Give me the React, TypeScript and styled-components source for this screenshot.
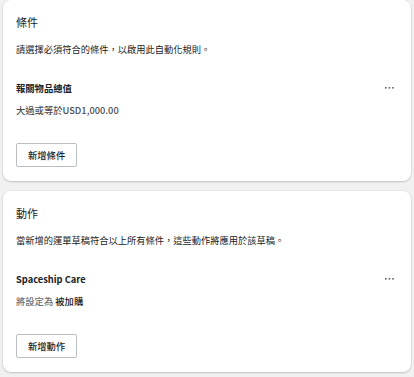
import styled, { createGlobalStyle } from "styled-components";

const GlobalStyle = createGlobalStyle`
  body {
    margin: 0;
    background: #f1f1f1;
    font-family: "Noto Sans CJK TC", "Noto Sans", sans-serif;
    color: #202223;
  }
`;

const Page = styled.div`
  display: flex;
  flex-direction: column;
  gap: 10px;
  padding: 0 3px 4px;
`;

const Card = styled.section`
  background: #fff;
  border-radius: 8px;
  box-shadow: 0 1px 2px rgba(0, 0, 0, 0.18), 0 0 0 1px rgba(0, 0, 0, 0.03);
  padding: 14px 13px 14px 13px;
  display: flex;
  flex-direction: column;
`;

const Title = styled.h2`
  margin: 0;
  font-size: 11px;
  font-weight: 400;
  line-height: 16px;
  color: #202223;
`;

const Description = styled.p`
  margin: 12px 0 0;
  font-size: 9.25px;
  line-height: 14px;
  color: #202223;
`;

const Item = styled.div`
  margin-top: 25px;
  display: flex;
  flex-direction: column;
  gap: 8px;
`;

const ItemHead = styled.div`
  display: flex;
  align-items: center;
  justify-content: space-between;
`;

const ItemTitle = styled.span`
  font-size: 9.3px;
  font-weight: 700;
  line-height: 14px;
  color: #202223;
`;

const MoreButton = styled.button`
  border: none;
  background: none;
  padding: 0;
  margin-right: 2px;
  width: 14px;
  height: 14px;
  display: flex;
  align-items: center;
  justify-content: center;
  cursor: pointer;
`;

const ItemValue = styled.span<{ $muted?: boolean }>`
  font-size: 9.3px;
  line-height: 14px;
  font-weight: 500;
  color: ${(p) => (p.$muted ? "#6d7175" : "#4a4d50")};
`;

const Strong = styled.span`
  color: #202223;
  font-weight: 500;
`;

const AddButton = styled.button`
  margin-top: 26px;
  align-self: flex-start;
  height: 24px;
  padding: 0 11px;
  background: #fff;
  border: 1px solid #babfc3;
  border-radius: 2px;
  font-family: inherit;
  font-size: 9.3px;
  font-weight: 500;
  color: #202223;
  cursor: pointer;
`;

const Dots = () => (
  <svg width="9" height="2" viewBox="0 0 9 2">
    <rect x="0" y="0" width="1.6" height="1.6" fill="#5c5f62" />
    <rect x="3.6" y="0" width="1.6" height="1.6" fill="#5c5f62" />
    <rect x="7.2" y="0" width="1.6" height="1.6" fill="#5c5f62" />
  </svg>
);

export default function App() {
  return (
    <>
      <GlobalStyle />
      <Page>
        <Card>
          <Title>條件</Title>
          <Description>請選擇必須符合的條件，以啟用此自動化規則。</Description>
          <Item>
            <ItemHead>
              <ItemTitle>報關物品總值</ItemTitle>
              <MoreButton aria-label="更多">
                <Dots />
              </MoreButton>
            </ItemHead>
            <ItemValue>大過或等於USD1,000.00</ItemValue>
          </Item>
          <AddButton>新增條件</AddButton>
        </Card>
        <Card>
          <Title>動作</Title>
          <Description>當新增的運單草稿符合以上所有條件，這些動作將應用於該草稿。</Description>
          <Item>
            <ItemHead>
              <ItemTitle>Spaceship Care</ItemTitle>
              <MoreButton aria-label="更多">
                <Dots />
              </MoreButton>
            </ItemHead>
            <ItemValue $muted>
              將設定為 <Strong>被加購</Strong>
            </ItemValue>
          </Item>
          <AddButton>新增動作</AddButton>
        </Card>
      </Page>
    </>
  );
}
